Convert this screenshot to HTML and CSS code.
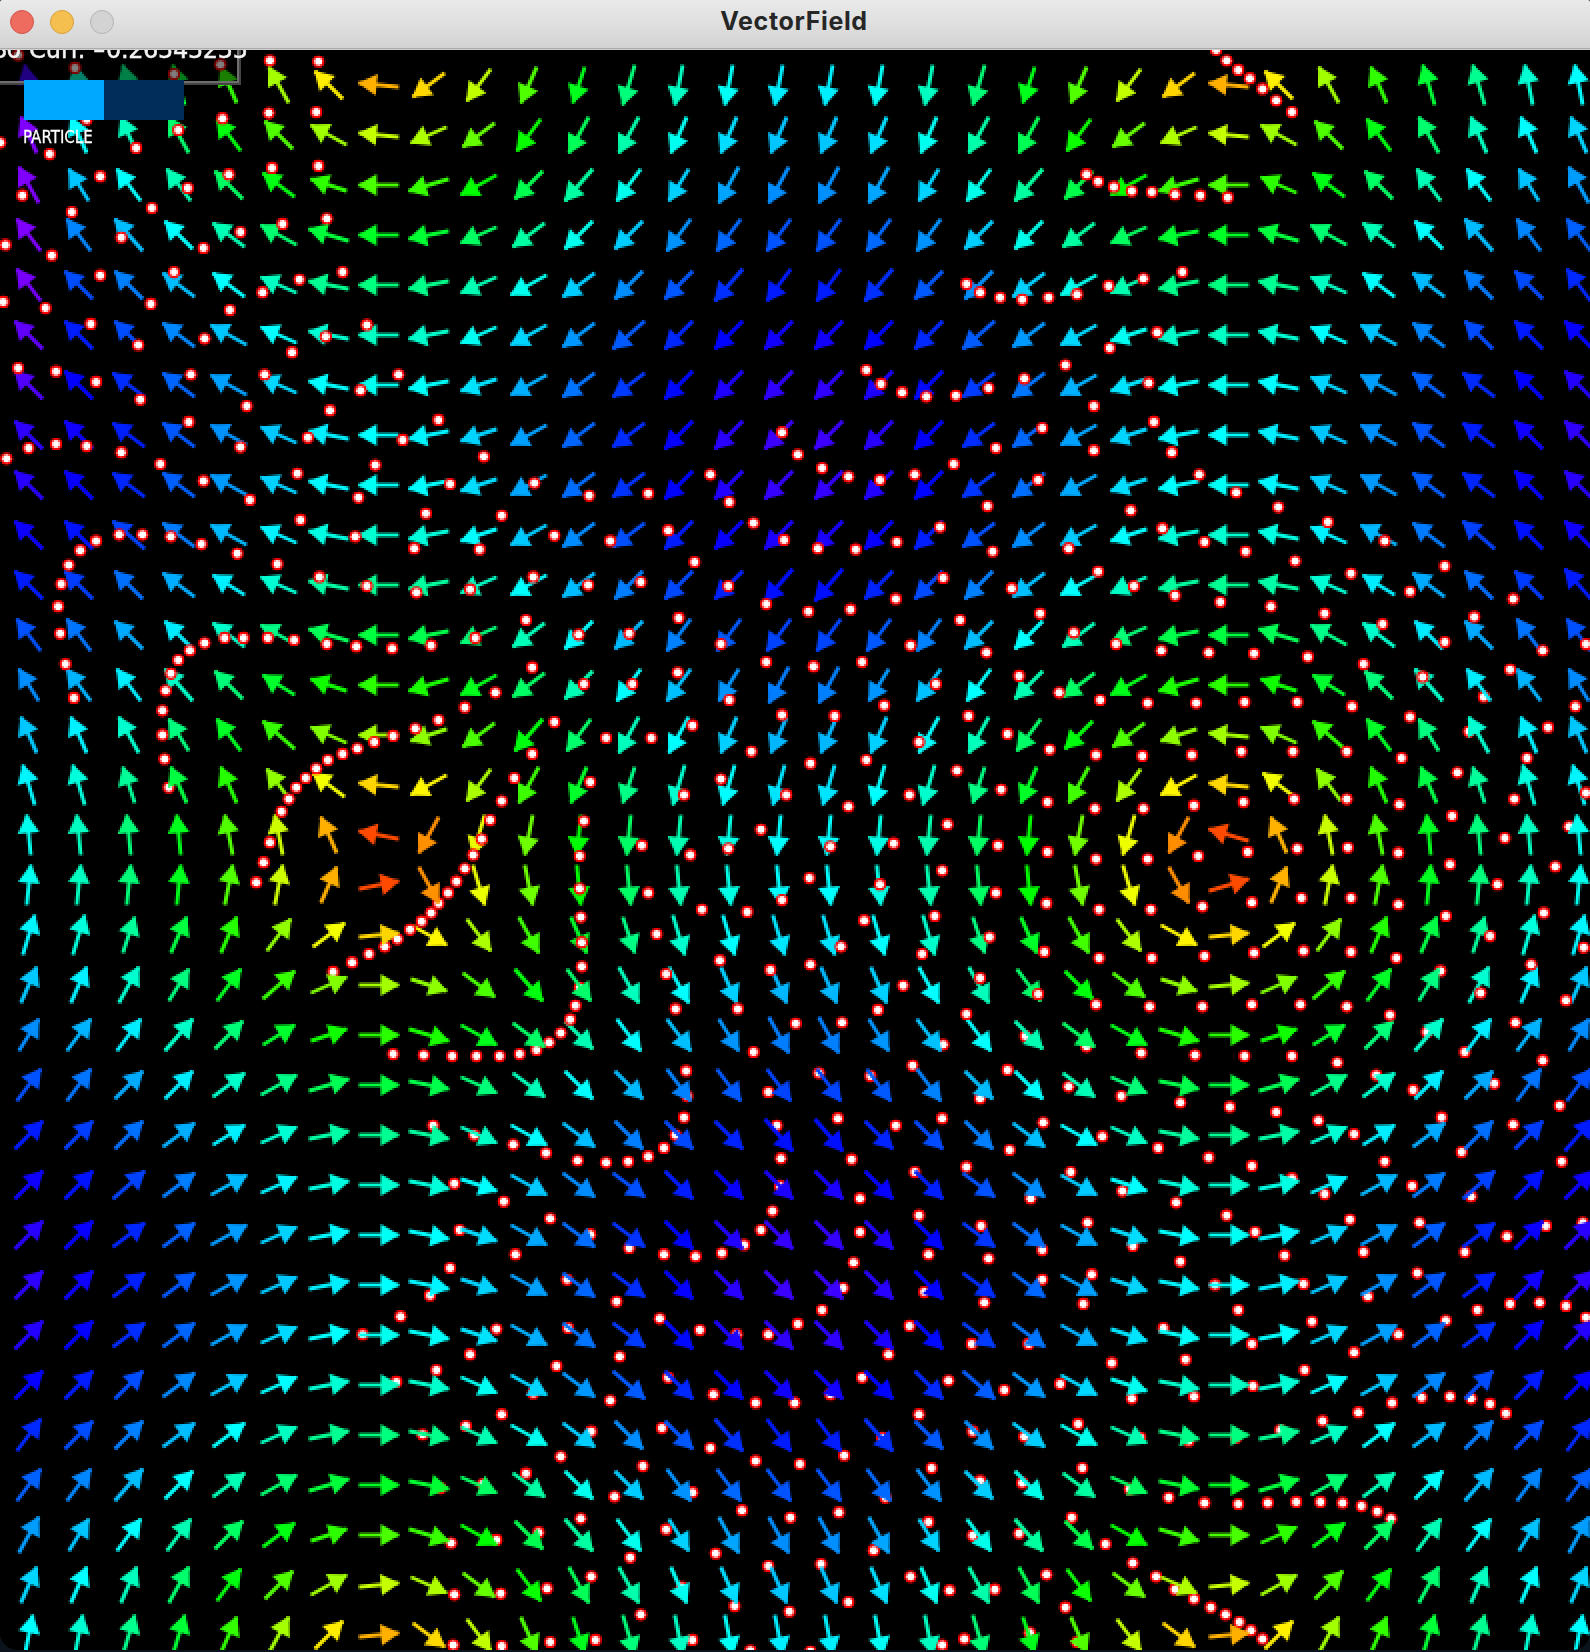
FILE: index.html
```
<!DOCTYPE html>
<html lang="en">
<head>
<meta charset="utf-8">
<title>VectorField</title>
<link rel="stylesheet" href="styles.css">
</head>
<body>
<div class="window">
  <header class="titlebar">
    <span class="light close"></span>
    <span class="light minimize"></span>
    <span class="light zoom"></span>
    <h1 class="title">VectorField</h1>
  </header>
  <main class="stage">
    <canvas class="field" id="field" width="795" height="800"></canvas>
    <div class="readout">
      <span class="readout-prev">80</span>
      <span class="readout-name">Curl:</span>
      <span class="readout-sign">-</span>
      <span class="readout-value">0.26545255</span>
    </div>
    <div class="toggle">
      <div class="toggle-track"><span class="toggle-on"></span></div>
      <span class="toggle-label">PARTICLE</span>
    </div>
  </main>
</div>
<script src="field.js"></script>
</body>
</html>
```
FILE: styles.css
```
* { box-sizing: border-box; }

body {
  margin: 0;
  background: #0b141d;
  font-family: Inter, "Liberation Sans", sans-serif;
}

.window {
  width: 1590px;
  height: 1650px;
  overflow: hidden;
  display: flex;
  flex-direction: column;
  border-radius: 2px 2px 18px 18px;
}

.titlebar {
  position: relative;
  flex: none;
  height: 50px;
  padding: 10px 10px 0;
  display: flex;
  gap: 16px;
  background: linear-gradient(#eaeaea, #d3d3d3 48px);
  border-bottom: 1px solid #cfcfcf;
  box-shadow: inset 0 -1px 0 #acacac;
}

.light {
  width: 24px;
  height: 24px;
  border-radius: 50%;
  border: 1px solid;
}
.close { background: #ed6b5f; border-color: #d35549; }
.minimize { background: #f5bf4f; border-color: #d9a03c; }
.zoom { background: #d3d3d3; border-color: #b4b4b4; }

.title {
  position: absolute;
  left: 0;
  right: 0;
  top: 7px;
  margin: 0;
  padding-right: 2px;
  text-align: center;
  font-size: 25px;
  line-height: 29px;
  font-weight: 700;
  letter-spacing: .65px;
  color: #262626;
}

.stage {
  position: relative;
  flex: 1;
  overflow: hidden;
  background: #000;
}

.field {
  display: block;
  width: 1590px;
  height: 1600px;
  image-rendering: pixelated;
}

.readout {
  position: absolute;
  left: -10px;
  top: -30px;
  width: 251px;
  height: 65px;
  background: rgba(0, 0, 0, .5);
  border: 2px solid #444;
  box-shadow: inset 0 0 0 2px #6e6e6e;
  color: #f2f2f2;
  font: 24px/28px "DejaVu Sans", sans-serif;
  -webkit-text-stroke: .5px #f2f2f2;
  white-space: nowrap;
}
.readout span { position: absolute; top: 14px; }
.readout-prev { left: 0; letter-spacing: -1px; }
.readout-name { left: 37px; }
.readout-sign { left: 101px; transform: scaleX(1.45); transform-origin: 0 0; }
.readout-value { left: 114px; letter-spacing: -.35px; }

.toggle {
  position: absolute;
  left: 24px;
  top: 30px;
  width: 160px;
}
.toggle-track {
  height: 40px;
  display: flex;
  background: #002d5a;
}
.toggle-on { width: 50%; background: #00a8ff; }
.toggle-label {
  display: block;
  margin: 7px 0 0 -1px;
  font: 18px/20px "DejaVu Sans", sans-serif;
  color: #fff;
  -webkit-text-stroke: .3px #fff;
  transform: scaleX(.835);
  transform-origin: 0 0;
}
```
FILE: field.js
```
const canvas = document.getElementById('field');
const ctx = canvas.getContext('2d');

// Field: u = sin(K (y - Y0)), v = sin(K (x - X0)); hue follows the magnitude.
const K = Math.PI / 836.5, X0 = 384, Y0 = 860, TOP = 50;
const firstColumnHue = [255, 270, 270, 270, 268, 263, 259];

function arrow(i, j) {
  const px = 28 + 50 * i, py = 85 + 50 * j;
  const u = Math.sin(K * (py - Y0)), v = Math.sin(K * (px - X0));
  const m = Math.hypot(u, v);
  const dx = Math.round(10 * u / m), dy = Math.round(10 * v / m);
  const cx = px / 2 + .4, cy = (py - TOP) / 2;
  const hue = i === 0 && j < 7 ? firstColumnHue[j] : 180 * m;
  const l = Math.hypot(dx, dy), ux = dx / l, uy = dy / l;
  const tx = cx + dx, ty = cy + dy;
  ctx.strokeStyle = ctx.fillStyle = `hsl(${hue} 100% 50%)`;
  ctx.lineWidth = 1.9;
  ctx.beginPath();
  ctx.moveTo(cx - dx, cy - dy);
  ctx.lineTo(tx, ty);
  ctx.stroke();
  const bx = tx - ux * 9, by = ty - uy * 9;
  ctx.beginPath();
  ctx.moveTo(tx + ux * .5, ty + uy * .5);
  ctx.lineTo(bx - uy * 5.5, by + ux * 5.5);
  ctx.lineTo(bx + uy * 5.5, by - ux * 5.5);
  ctx.closePath();
  ctx.fill();
}

const points = `256,57 302,58 71,64 165,70 209,61 17,52 255,107 300,106 211,112 169,123 129,140 82,113 47,146 0,135
258,159 302,157 217,165 178,178 95,167 21,185 144,197 68,201 5,232 49,242 115,225 193,235 228,220 268,212 310,207
95,261 165,258 143,288 43,292 3,286 218,294 249,277 284,265 325,258 86,307 131,327 194,321 277,334 309,319 348,308
17,349 53,352 91,362 181,355 133,379 251,355 342,370 378,355 234,385 313,389 179,400 292,415 416,398 382,417 228,424
6,435 27,425 53,421 82,423 115,429 152,440 356,441 459,433 193,456 282,449 237,474 340,472 427,459 507,458 559,470 615,468
285,493 404,487 476,489 337,509 393,520 455,521 526,508 579,513 634,503 225,525 191,516 162,509 135,507 113,507 91,513
76,522 65,536 58,554 55,575 57,601 62,630 70,662 263,535 303,547 348,556 395,562 446,559 506,547 558,555 608,552 659,533 691,556
156,720 154,697 154,674 157,655 162,639 169,626 180,617 194,610 213,605 231,605 254,605 279,607 310,611 338,613
372,615 409,612 451,605 499,588 549,602 597,601 644,586 684,611 643,638 600,649 554,649 505,633 470,657 441,671 416,683 394,691
373,698 355,704 339,710 325,715 311,721 300,729 290,738 281,747 274,758 267,770 256,799 250,818 243,837
526,685 575,700 618,700 657,688 692,664 505,715 488,738 476,760 465,778 457,796 449,811 441,824 433,836 425,847 409,866
400,874 389,882 350,905 334,913 560,742 554,779 550,812 550,843 551,870 552,894 552,917 546,954 541,967
532,980 521,989 509,996 493,1000 474,1002 452,1002 429,1002 402,1001 373,1000 609,802 615,847 623,886 632,924 641,957
655,811 649,754 684,739 691,805 713,713 722,787 746,754 769,724 742,678 792,679 822,721 805,765 788,803 768,833 742,854 709,865
666,863 683,911 731,920 700,957 755,971 799,970 833,958 769,915 798,898 820,873 835,839 848,800 863,754 908,731 872,704 839,669
888,649 919,679 956,696 996,711 950,749 994,761 899,782 894,826 887,869 875,905 857,935 947,802 945,847 939,889 930,928 917,962
994,808 993,857 991,903 985,943 742,410 757,431 780,444 805,452 835,455 868,450 905,440 945,425 989,406 1038,385 1090,363
674,450 692,476 715,496 744,512 776,520 812,521 851,514 892,500 937,480 985,455 1038,427 1095,400 822,351 836,364 856,372 879,376
907,375 938,368 972,359 1011,346 1053,330 1098,315 917,269 930,277 949,282 970,284 995,282 1022,279 1052,271 1085,264 1122,258
1031,165 1042,172 1057,177 1074,181 1093,182 1115,184 1139,185 1165,187 1154,47 1164,57 1175,66 1186,74 1198,84 1211,95 1226,106
727,573 767,580 807,578 850,568 895,548 942,523 727,628 772,632 818,628 864,612 911,588 960,558 1014,520 1073,484 1138,450
1112,429 1173,467 1213,481 1260,495 1314,513 1371,537 1436,568 1103,501 1143,514 1182,523 1229,532 1282,544 1338,561 1399,585 1464,617
1042,542 1076,556 1115,565 1158,571 1206,575 1257,582 1312,592 1371,609 1433,635 1495,670 987,582 1019,600 1059,611 1102,617 1147,619
1190,620 1241,623 1294,630 1350,642 1469,690 936,619 967,641 1005,657 1044,664 1089,667 1135,667 1181,666 1231,666
1283,670 1338,680 1449,719 1505,752 1505,611 1040,716 1084,717 1131,716 1178,713 1227,713 1278,713 1330,719 1383,733 1437,758
1039,767 1085,767 1133,764 1180,761 1228,758 1278,758 1328,763 1378,774 1428,795 1476,822
1040,815 1089,815 1137,812 1184,808 1231,805 1279,804 1327,809 1376,820 1421,839 1465,866
1043,863 1092,863 1141,860 1188,856 1235,852 1282,852 1327,858 1372,869 1414,888 1453,915 1486,949 1503,899
1043,909 1093,909 1143,907 1190,904 1237,902 1282,903 1325,909 1405,942 1438,970
1040,953 1091,955 1141,955 1188,953 1234,953 1278,955 1319,963
651,1016 652,1040 649,1060 641,1077 630,1089 615,1097 596,1102 575,1103 548,1101 518,1094 487,1086 450,1077 411,1068
715,998 729,1036 777,1018 826,1021 866,1011 895,991 973,983 930,1042 956,1015 894,1061 850,1068 795,1061 737,1068 741,1099 808,1100
868,1112 917,1107 958,1091 990,1065 1014,1031 1031,993 1083,999 1134,1001 1181,1002 1226,1002 1269,1008 1306,1020 1341,1034 1390,998
1064,1040 1120,1046 1167,1050 1211,1055 1251,1063 1285,1076 1418,1028 1464,1006 1368,1060 1046,1078 1099,1089 1147,1098 1188,1106
1226,1118 1257,1133 1314,1102 1387,1093 1436,1067 1480,1049 1016,1112 1065,1130 1116,1141 1164,1153 1191,1169 1281,1157 1340,1125
1396,1135 1482,1102 978,1137 1032,1160 1075,1182 1120,1197 1219,1191 1294,1188 1347,1160 1390,1188 1430,1173 1467,1163 1502,1160
740,1125 733,1149 722,1167 706,1181 685,1189 660,1192 630,1190 597,1184 560,1171 522,1156 478,1140 431,1123 816,1137 872,1153 816,1169
881,1190 810,1198 800,1222 877,1226 938,1194 934,1236 989,1186 989,1214 931,1163 1036,1209 1028,1237 436,1167 489,1190 427,1203 408,1229
538,1214 585,1235 380,1249 344,1266 471,1261 446,1285 414,1300 376,1311 539,1260 626,1251 664,1262 699,1266 729,1266 757,1256 780,1243
528,1296 588,1287 506,1322 579,1329 634,1307 677,1323 717,1331 754,1331 788,1323 818,1307 843,1285 863,1258 922,1275 976,1275 900,1310
953,1319 1006,1313 872,1342 1055,1293 1074,1327 1125,1290 1133,1325 1153,1219 1237,1218 1175,1243 1245,1254 1188,1275 1285,1283 1327,1266
1298,1230 1345,1208 1238,1300 1189,1315 1372,1253 1402,1243 1433,1237 1461,1236 1486,1239 1505,1250 1104,1260
1255,1348 1289,1340 1321,1331 1349,1326 1376,1325 1396,1327 1414,1332 1429,1341 476,1342 442,1353 401,1361 561,1358 628,1355 532,1382
610,1391 583,1420 674,1374 717,1386 759,1389 801,1381 499,1398 458,1408 418,1412 551,1441 511,1454 471,1461 428,1464 598,1478 632,1451
657,1416 704,1433 750,1440 796,1435 840,1421 884,1393 837,1364 923,1358 972,1363 1023,1351 1027,1393 970,1407 930,1405 881,1444 829,1471
779,1484 729,1486 679,1474 561,1496 519,1507 475,1512 431,1513 608,1532 647,1506 697,1524 749,1529 805,1520 864,1496 901,1509 944,1508
923,1457 967,1455 1017,1440 1072,1413 1049,1465 993,1494 1011,1525 1022,1558 977,1549 915,1555 894,1561 430,1561 476,1562 522,1558
565,1556 657,1556 712,1566 769,1567 1082,1364 1128,1367 1173,1364 1215,1357 1109,1421 1143,1426 1175,1427 1203,1426 1230,1425 1253,1425
1274,1426 1292,1429 1307,1434 1320,1441 1075,1483 1097,1496 1115,1508 1133,1517 1149,1525 1163,1532 1176,1539 1187,1547 1198,1555`;
// Particles that lie beneath the arrows although they are in the upper part.
const lower = `160,747 416,857 377,891 365,898 316,922 550,937 1408,661 1394,694 1489,784 1367,921 1354,979`;

const parse = (s) => s.trim().split(/\s+/).map((p) => p.split(',').map(Number));
const SCALE = 1590 / 1509;

function particle([x, y]) {
  const cx = x * SCALE / 2 + .1, cy = (y * SCALE - TOP) / 2 + .2;
  ctx.fillStyle = '#f00';
  ctx.beginPath();
  ctx.arc(cx, cy, 3.1, 0, 7);
  ctx.fill();
  ctx.fillStyle = '#fff';
  ctx.beginPath();
  ctx.arc(cx, cy, 2, 0, 7);
  ctx.fill();
}

ctx.fillStyle = '#000';
ctx.fillRect(0, 0, 795, 800);
const all = parse(points);
parse(lower).forEach(particle);
all.filter((p) => p[1] >= 975).forEach(particle);
for (let j = 0; j < 32; j++) for (let i = 0; i < 32; i++) arrow(i, j);
all.filter((p) => p[1] < 975).forEach(particle);
```
